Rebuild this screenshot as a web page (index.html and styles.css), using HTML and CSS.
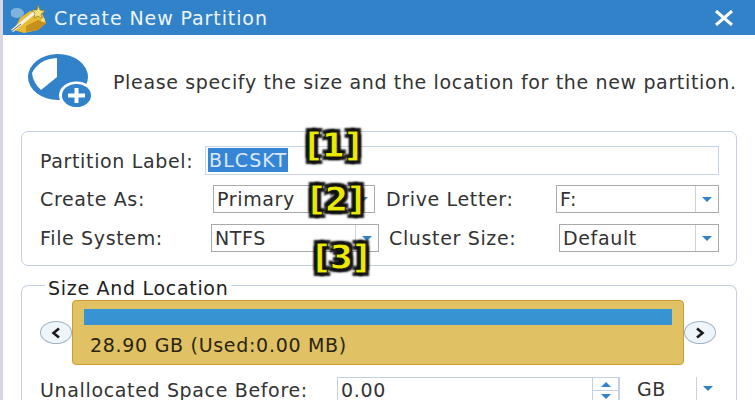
FILE: index.html
```html
<!DOCTYPE html>
<html lang="en">
<head>
    <meta charset="UTF-8">
    <title>Create New Partition</title>
    <link rel="stylesheet" href="styles.css">
</head>
<body>
    <div class="dialog">
        <div class="titlebar">
            <svg class="app-icon" width="36" height="32" viewBox="11 1 36 32">
                <ellipse cx="17" cy="12" rx="7" ry="5" fill="#7fb2dc"/>
                <path d="M14 29 L20 17 L30 10 L42 12 L46 22 L38 29 L24 32 Z" fill="#e8bb34"/>
                <path d="M26 25 L38 19 L46 22 L38 29 L26 31 Z" fill="#c98f1c"/>
                <path d="M38 4 L40 9 L45 10 L41 13 L42 18 L38 15 L34 17 L35 12 L32 9 L37 9 Z" fill="#f6e27a" stroke="#8a7a2a" stroke-width="0.7"/>
                <circle cx="43" cy="19" r="2" fill="#f6e27a"/>
                <path d="M12 30 L34 12" stroke="#f4f1e4" stroke-width="3"/>
                <path d="M12 30 L21 23" stroke="#6e6a58" stroke-width="1"/>
            </svg>
            <span class="title-text">Create New Partition</span>
            <svg class="close-icon" width="20" height="16" viewBox="0 0 20 16">
                <path d="M2 1 L18 15 M18 1 L2 15" stroke="#fff" stroke-width="3"/>
            </svg>
        </div>

        <div class="intro">
            <svg class="pie-icon" width="70" height="66" viewBox="0 0 70 66">
                <ellipse cx="33" cy="26" rx="30" ry="23" fill="#3182c8"/>
                <path d="M32 26 L32 7 Q14 8 7 22 Q8 32 16 39 Z" fill="#fff"/>
                <ellipse cx="51.5" cy="44.5" rx="17.5" ry="14" fill="#fff"/>
                <ellipse cx="51.5" cy="44.5" rx="14.5" ry="11.5" fill="#3182c8"/>
                <path d="M51.5 37 V52 M43 44.5 H60" stroke="#fff" stroke-width="4"/>
            </svg>
            <p class="intro-text">Please specify the size and the location for the new partition.</p>
        </div>

        <div class="group group-main">
            <div class="row row-label">
                <label class="lbl lbl-partition">Partition Label:</label>
                <div class="text-input"><span class="selected">BLCSKT</span></div>
            </div>
            <div class="row row-create">
                <label class="lbl lbl-create">Create As:</label>
                <div class="select select-create"><span>Primary</span><i class="drop"></i></div>
                <label class="lbl lbl-drive">Drive Letter:</label>
                <div class="select select-drive"><span>F:</span><i class="drop"></i></div>
            </div>
            <div class="row row-file">
                <label class="lbl lbl-file">File System:</label>
                <div class="select select-file"><span>NTFS</span><i class="drop"></i></div>
                <label class="lbl lbl-cluster">Cluster Size:</label>
                <div class="select select-cluster"><span>Default</span><i class="drop"></i></div>
            </div>
        </div>

        <div class="group group-size">
            <span class="legend">Size And Location</span>
            <div class="slider">
                <button class="nav-btn">
                    <svg width="12" height="12" viewBox="0 0 12 12"><path d="M9 1.5 L3.5 6 L9 10.5" fill="none" stroke="#1c1c1c" stroke-width="2.6"/></svg>
                </button>
                <div class="disk">
                    <div class="disk-bar"></div>
                    <div class="disk-text">28.90 GB (Used:0.00 MB)</div>
                </div>
                <button class="nav-btn">
                    <svg width="12" height="12" viewBox="0 0 12 12"><path d="M3 1.5 L8.5 6 L3 10.5" fill="none" stroke="#1c1c1c" stroke-width="2.6"/></svg>
                </button>
            </div>
            <div class="row row-before">
                <label class="lbl lbl-before">Unallocated Space Before:</label>
                <div class="spin-input">
                    <span>0.00</span>
                    <div class="spin"><i class="up"></i><i class="down"></i></div>
                </div>
                <div class="unit"><span>GB</span><i class="drop"></i></div>
            </div>
        </div>
    </div>

    <div class="mark mark-1">[1]</div>
    <div class="mark mark-2">[2]</div>
    <div class="mark mark-3">[3]</div>
</body>
</html>
```

FILE: styles.css
```css
* {
    margin: 0;
    padding: 0;
    box-sizing: border-box;
    font-family: 'DejaVu Sans', Verdana, sans-serif;
}

html, body {
    height: 400px;
    overflow: hidden;
}

body {
    background-color: #d8d6e2;
    color: #333;
    position: relative;
}

.dialog {
    margin-left: 3px;
    height: 400px;
    overflow: hidden;
    background-color: #fff;
}

.titlebar {
    height: 35px;
    background-color: #3182c8;
    color: #fff;
    display: flex;
    align-items: center;
    padding-left: 8px;
}

.app-icon {
    margin-right: 7px;
}

.title-text {
    font-size: 19px;
    letter-spacing: 0.9px;
    color: #eef5fb;
}

.close-icon {
    margin-left: auto;
    margin-right: 21px;
}

.intro {
    height: 96px;
    display: flex;
    align-items: flex-start;
    padding-left: 22px;
    padding-top: 16px;
}

.pie-icon {
    width: 70px;
    height: 66px;
}

.intro-text {
    font-size: 19px;
    letter-spacing: 0.65px;
    margin-left: 18px;
    margin-top: 20px;
    white-space: nowrap;
}

.group {
    margin-left: 18px;
    width: 716px;
    border: 1px solid #c3cfe2;
    border-radius: 7px;
}

.group-main {
    height: 135px;
    padding-top: 14px;
}

.group-size {
    margin-top: 19px;
    height: 115px;
    border-bottom: none;
    border-radius: 7px 7px 0 0;
    position: relative;
    padding-top: 14px;
}

.legend {
    position: absolute;
    left: 23px;
    top: -9px;
    padding: 0 3px;
    background-color: #fff;
    font-size: 19px;
    line-height: 22px;
    letter-spacing: 0.7px;
    color: #222;
}

.row {
    display: flex;
    align-items: center;
    font-size: 19px;
    letter-spacing: 0.65px;
}

.lbl {
    white-space: nowrap;
    color: #333;
}

.row-label {
    height: 29px;
    padding-left: 18px;
}

.lbl-partition {
    width: 165px;
}

.text-input {
    width: 514px;
    height: 29px;
    border: 1px solid #c3d3e8;
    padding: 1px 2px;
    font-size: 19px;
    letter-spacing: 1.1px;
}

.selected {
    display: inline-block;
    background-color: #3584d6;
    color: #dbe9f7;
    padding: 0 1px;
    line-height: 24px;
}

.row-create {
    margin-top: 10px;
    height: 28px;
    padding-left: 18px;
}

.row-file {
    margin-top: 11px;
    height: 28px;
    padding-left: 18px;
}

.lbl-create {
    width: 173px;
}

.lbl-file {
    width: 171px;
}

.lbl-drive {
    width: 170px;
    margin-left: 11px;
}

.lbl-cluster {
    width: 170px;
    margin-left: 10px;
}

.select {
    height: 28px;
    border: 1px solid #a9a9a9;
    display: flex;
    align-items: center;
    padding-left: 3px;
    background-color: #fff;
}

.select span {
    flex: 1;
}

.select-create {
    width: 162px;
}

.select-drive {
    width: 163px;
}

.select-file {
    width: 168px;
}

.select-cluster {
    width: 160px;
}

.drop {
    width: 23px;
    height: 100%;
    border-left: 1px solid #c9d3e0;
    display: flex;
    align-items: center;
    justify-content: center;
}

.drop::after {
    content: "";
    border-left: 5px solid transparent;
    border-right: 5px solid transparent;
    border-top: 5px solid #3182c8;
}

.slider {
    display: flex;
    align-items: center;
    padding-left: 18px;
}

.nav-btn {
    width: 32px;
    height: 23px;
    border: 1px solid #9fb2c6;
    border-radius: 50%;
    background-color: #eef5fb;
    display: flex;
    align-items: center;
    justify-content: center;
}

.disk {
    width: 612px;
    height: 65px;
    background-color: #e0c163;
    border: 1px solid #cf9c2e;
    border-radius: 4px;
    padding: 8px 11px 0;
}

.disk-bar {
    height: 16px;
    background-color: #3893d2;
}

.disk-text {
    margin-top: 9px;
    padding-left: 6px;
    font-size: 19px;
    letter-spacing: 0.7px;
    color: #2a2412;
}

.row-before {
    margin-top: 12px;
    padding-left: 18px;
    align-items: flex-start;
}

.lbl-before {
    width: 297px;
    margin-top: 2px;
}

.spin-input {
    width: 283px;
    height: 23px;
    border: 1px solid #c3cfe2;
    border-bottom: none;
    display: flex;
    padding-left: 3px;
    line-height: 25px;
}

.spin-input span {
    flex: 1;
}

.spin {
    width: 27px;
    height: 23px;
    border-left: 1px solid #c3cfe2;
    border-right: 1px solid #c3cfe2;
    display: flex;
    flex-direction: column;
}

.spin i {
    height: 13px;
    flex-shrink: 0;
    display: flex;
    align-items: center;
    justify-content: center;
    border-bottom: 1px solid #c3cfe2;
}

.spin .down {
    border-bottom: none;
    height: 10px;
}

.spin .up::after {
    content: "";
    border-left: 5px solid transparent;
    border-right: 5px solid transparent;
    border-bottom: 5px solid #3182c8;
}

.spin .down::after {
    content: "";
    border-left: 5px solid transparent;
    border-right: 5px solid transparent;
    border-top: 5px solid #3182c8;
}

.unit {
    display: flex;
    margin-left: 17px;
    width: 82px;
    height: 23px;
    line-height: 25px;
}

.unit span {
    width: 60px;
}

.unit .drop {
    height: 23px;
}

.mark {
    position: absolute;
    font-size: 34px;
    font-weight: bold;
    color: #eaea00;
    -webkit-text-stroke: 1px #111;
    text-shadow: 0 0 2px #111, 3px 3px 2px #111, -3px -3px 2px #111, 3px -3px 2px #111, -3px 3px 2px #111;
    line-height: 36px;
}

.mark-1 {
    left: 306px;
    top: 127px;
}

.mark-2 {
    left: 309px;
    top: 181px;
}

.mark-3 {
    left: 314px;
    top: 239px;
}
```
